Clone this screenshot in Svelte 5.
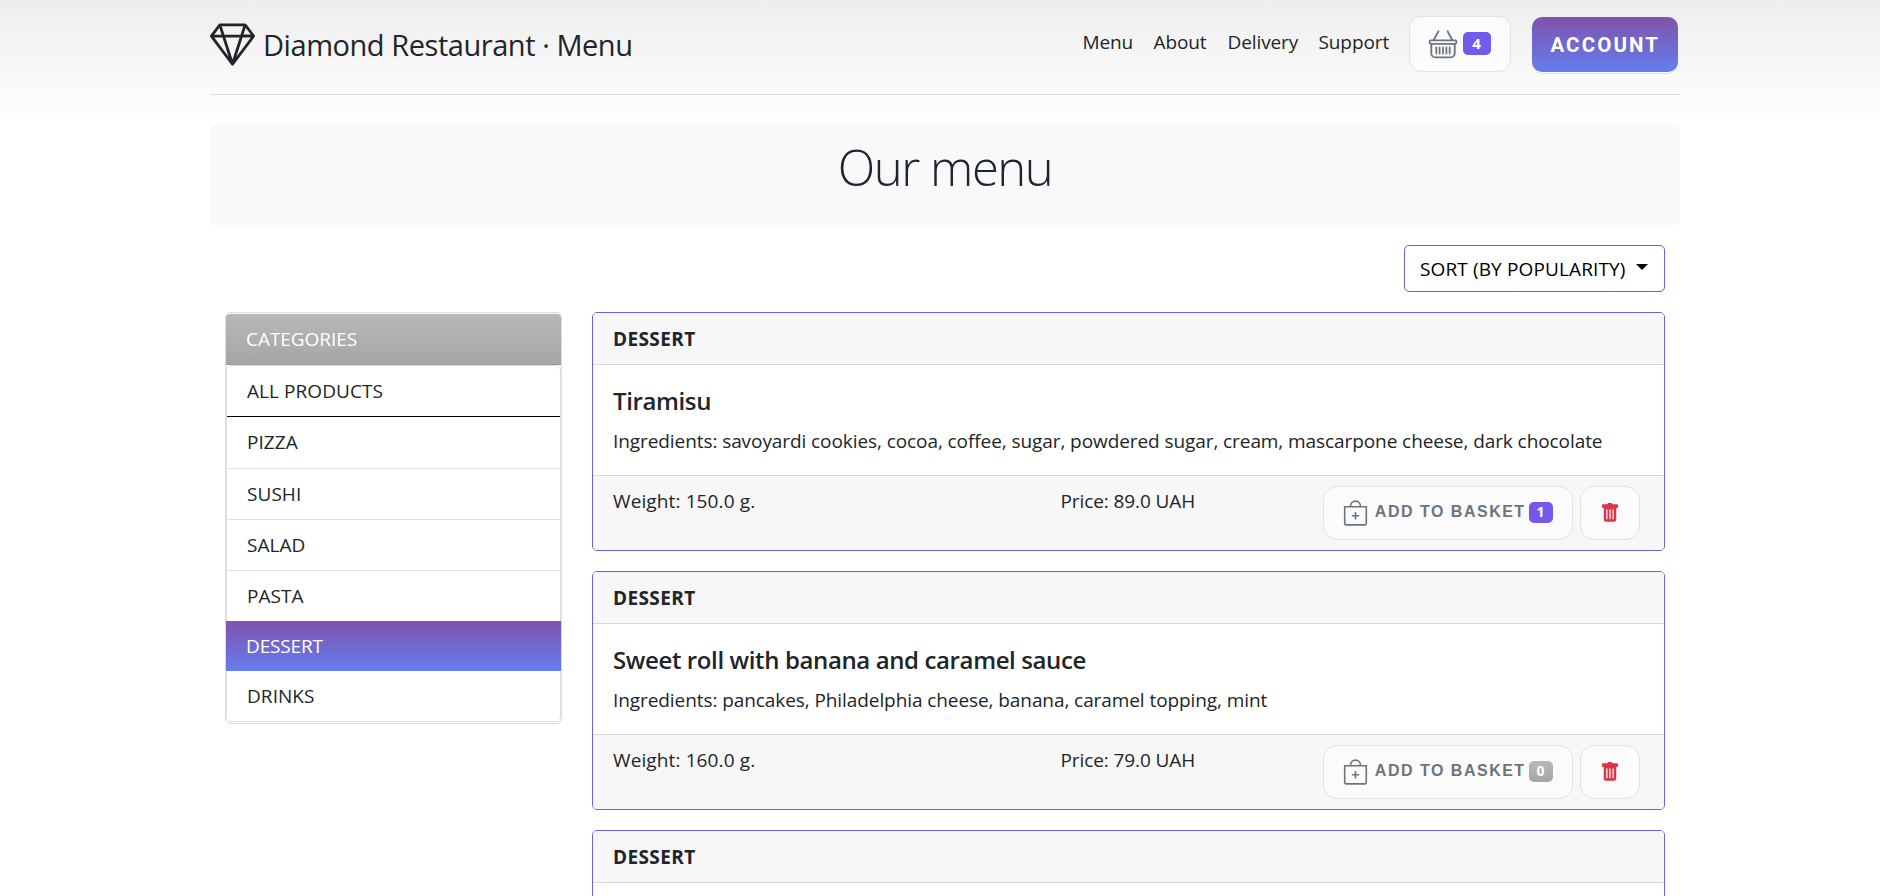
<script>
  const links = [
    { label: 'Menu', width: 51 },
    { label: 'About', width: 54 },
    { label: 'Delivery', width: 71 },
    { label: 'Support', width: 72 }
  ];
  const categories = ['ALL PRODUCTS', 'PIZZA', 'SUSHI', 'SALAD', 'PASTA', 'DESSERT', 'DRINKS'];
  const active = 'DESSERT';
  const products = [
    { category: 'DESSERT', name: 'Tiramisu', ingredients: 'savoyardi cookies, cocoa, coffee, sugar, powdered sugar, cream, mascarpone cheese, dark chocolate', weight: '150.0', price: '89.0', count: 1 },
    { category: 'DESSERT', name: 'Sweet roll with banana and caramel sauce', ingredients: 'pancakes, Philadelphia cheese, banana, caramel topping, mint', weight: '160.0', price: '79.0', count: 0 },
    { category: 'DESSERT', name: '', ingredients: '', weight: '', price: '', count: 0 }
  ];
</script>

<div class="page">
  <header>
    <a class="brand" href="#top">
      <svg class="gem" viewBox="0 0 16 16" fill="currentColor"><path d="M3.1.7a.5.5 0 0 1 .4-.2h9a.5.5 0 0 1 .4.2l2.976 3.974c.149.185.156.45.01.644L8.4 15.3a.5.5 0 0 1-.8 0L.1 5.3a.5.5 0 0 1 0-.6l3-4zm11.386 3.785-1.806-2.41-.776 2.413 2.582-.003zm-3.633.004.961-2.989H4.186l.963 2.995 5.704-.006zM5.47 5.495 8 13.366l2.532-7.876-5.062.005zm-1.371-.999-.78-2.422-1.818 2.425 2.598-.003zM1.499 5.5l5.113 6.817-2.192-6.82L1.5 5.5zm7.889 6.817 5.123-6.83-2.928.002-2.195 6.828z" /></svg>
      <span>Diamond Restaurant · Menu</span>
    </a>
    <nav>
      {#each links as link}
        <a href="#top" style:width="{link.width}px">{link.label}</a>
      {/each}
    </nav>
    <button class="soft basket">
      <svg width="30" height="30" viewBox="0 0 30 30" fill="none" stroke="currentColor" stroke-width="1.8" stroke-linecap="round" stroke-linejoin="round">
        <path d="M10.5 2.3 5.7 11M19.5 2.3l4.8 8.7" />
        <rect x="1.6" y="11.4" width="26.8" height="3.4" rx="1.2" />
        <path d="M3.3 14.8v9.5a4 4 0 0 0 4 4h15.4a4 4 0 0 0 4-4v-9.5M8.3 18.5v6M11.6 18.5v6M15 18.5v6M18.4 18.5v6M21.7 18.5v6" />
      </svg>
      <span class="badge">4</span>
    </button>
    <button class="account">ACCOUNT</button>
  </header>

  <section class="hero"><h1>Our menu</h1></section>

  <div class="toolbar">
    <button class="sort"><span>SORT (BY POPULARITY)</span><i></i></button>
  </div>

  <main>
    <aside>
      <h2>CATEGORIES</h2>
      <ul>
        {#each categories as name, i}
          <li class:first={i === 0} class:active={name === active}>{name}</li>
        {/each}
      </ul>
    </aside>

    <div class="cards">
      {#each products as p}
        <article>
          <div class="head">{p.category}</div>
          <div class="body">
            <h3>{p.name}</h3>
            {#if p.ingredients}<p>Ingredients: {p.ingredients}</p>{/if}
          </div>
          {#if p.name}
            <div class="foot">
              <span class="weight">Weight: {p.weight} g.</span>
              <span class="price">Price: {p.price} UAH</span>
              <button class="soft add">
                <svg width="25" height="26" viewBox="0 0 25 26" fill="none" stroke="currentColor" stroke-width="1.6">
                  <path d="M1.7 6.7h21.6v16.2a2 2 0 0 1-2 2H3.7a2 2 0 0 1-2-2zM7.6 6.7V6a4.9 4.9 0 0 1 9.8 0v.7M12.5 12v7.4M8.8 15.7h7.4" />
                </svg>
                <span class="label">ADD TO BASKET</span>
                <span class="badge" class:empty={p.count === 0}>{p.count}</span>
              </button>
              <button class="soft remove" aria-label="Remove">
                <svg width="20" height="20" viewBox="0 0 16 16" fill="currentColor"><path d="M2.5 1a1 1 0 0 0-1 1v1a1 1 0 0 0 1 1H3v9a2 2 0 0 0 2 2h6a2 2 0 0 0 2-2V4h.5a1 1 0 0 0 1-1V2a1 1 0 0 0-1-1H10a1 1 0 0 0-1-1H7a1 1 0 0 0-1 1H2.5zm3 4a.5.5 0 0 1 .5.5v7a.5.5 0 0 1-1 0v-7a.5.5 0 0 1 .5-.5zM8 5a.5.5 0 0 1 .5.5v7a.5.5 0 0 1-1 0v-7A.5.5 0 0 1 8 5zm3 .5v7a.5.5 0 0 1-1 0v-7a.5.5 0 0 1 1 0z" /></svg>
              </button>
            </div>
          {/if}
        </article>
      {/each}
    </div>
  </main>
</div>

<style>
  :global(body) { overflow: hidden; }
  .page, .page * { box-sizing: border-box; }
  .page {
    height: 896px;
    overflow: hidden;
    padding: 0 200px 0 210px;
    background: linear-gradient(180deg, #eee, #fff 125px, #fff);
    color: #212529;
    font: 400 19px/30px "Open Sans", "Noto Sans", sans-serif;
    letter-spacing: -0.08px;
  }
  a { color: inherit; text-decoration: none; white-space: nowrap; }
  h1, h2, h3, p, ul { margin: 0; padding: 0; list-style: none; }
  button { font: inherit; letter-spacing: inherit; margin: 0; padding: 0; display: flex; align-items: center; white-space: nowrap; }

  header { height: 95px; display: flex; align-items: flex-start; border-bottom: 1px solid #dcdde6; }
  .brand { display: flex; width: 872.5px; padding-top: 21px; font-size: 29px; line-height: 48px; letter-spacing: -0.45px; }
  .gem { width: 45px; height: 45px; margin: 0.5px 8px 0 0; }
  nav { display: flex; gap: 20px; padding-top: 27px; width: 326px; flex: none; letter-spacing: -0.1px; }
  .soft { border: 1px solid #dee2e6; border-radius: 12px; background: #fbfbfb; color: #6c757d; }
  .basket { width: 102px; height: 56px; margin-top: 16px; padding-left: 18px; }
  .badge {
    display: flex; align-items: center; justify-content: center;
    width: 28px; height: 23px; border-radius: 5px;
    background: #735aec; color: #fff; font: 700 15px/1 "Open Sans", sans-serif; letter-spacing: 0;
  }
  .basket .badge { margin: 0 0 1px 5px; }
  .account {
    width: 146.5px; height: 55px; margin: 17px 0 0 21px; padding: 2px 0 0 1px; justify-content: center;
    border: 0; border-radius: 10px; background: linear-gradient(#7f53ac, #647dee); color: #fff;
    box-shadow: 0 1px 0 #fff, 0 2px 0 #dcdfe5;
    font: 700 20.5px/1 Roboto, Arial, sans-serif; letter-spacing: 2.1px;
  }

  .hero { height: 100px; margin-top: 30px; border-radius: 6px; background: #f8f9fb; text-align: center; }
  h1 { padding-top: 12px; font-size: 49px; line-height: 60px; font-weight: 300; letter-spacing: -1.45px; }

  .toolbar { display: flex; justify-content: flex-end; padding: 20px 15px 20px 0; }
  .sort { width: 261px; height: 47px; padding: 1px 16px 0 15px; justify-content: space-between; border: 1px solid #735aec; border-radius: 5px; background: #fff; color: #000; letter-spacing: 0.13px; }
  .sort i { border: 6px solid transparent; border-top-color: #000; border-bottom: 0; margin-bottom: 4px; }

  main { display: flex; gap: 30px; padding: 0 15px; align-items: flex-start; }
  aside { width: 337px; height: 412px; flex: none; border: 1px solid #dcdcdc; border-radius: 5px; background: #fff; letter-spacing: 0.06px; }
  h2 { height: 51px; margin-top: 1px; padding: 0 20px; border-bottom: 1px solid #999; border-radius: 4px 4px 0 0; background: linear-gradient(#b8b8b8, #a6a6a6); color: #fff; font: inherit; line-height: 51px; letter-spacing: -0.05px; }
  ul { border: 1px solid #dfdfdf; border-radius: 5px; }
  li { height: 51px; padding: 0 20px; border-bottom: 1px solid #dfdfdf; line-height: 51px; }
  li.first { border-bottom-color: #000; }
  li.first + li { height: 52px; }
  li.active { height: 50px; margin: -1px -1px 0; border: 0; line-height: 51px; background: linear-gradient(#7f53ac, #647dee); color: #fff; letter-spacing: -0.15px; }
  li:last-child { border: 0; height: 50px; }

  .cards { flex: 1; display: flex; flex-direction: column; gap: 20px; }
  article { height: 239px; border: 1px solid #735aec; border-radius: 5px; background: #fff; overflow: hidden; }
  .head { height: 52px; padding: 0 20px; border-bottom: 1px solid #d8d8d8; background: #f7f7f7; line-height: 52px; font-weight: 700; letter-spacing: 0.4px; }
  .body { height: 110px; padding: 19px 20px 0; }
  h3 { height: 41px; font-size: 24px; line-height: 34px; font-weight: 600; letter-spacing: -0.38px; }
  p { white-space: nowrap; line-height: 32px; }
  .foot { height: 75px; display: flex; align-items: flex-start; padding: 10px 24px 0 20px; border-top: 1px solid #d8d8d8; background: #f7f7f7; }
  .weight { width: 447.5px; letter-spacing: 0.12px; }
  .price { flex: 1; letter-spacing: -0.1px; }
  .add { width: 250px; height: 54px; border-radius: 14px; padding-left: 19px; }
  .label { width: 156.5px; margin: 0 0 3px 4px; font: 700 16px/1 "Liberation Sans", Arial, sans-serif; letter-spacing: 1.5px; }
  .add .badge { width: 24px; height: 21px; margin-bottom: 2px; font-size: 14px; }
  .badge.empty { background: linear-gradient(#b8b8b8, #a6a6a6); }
  .remove { width: 60px; height: 54px; margin-left: 7px; border-radius: 14px; justify-content: center; color: #dc3545; }
</style>
